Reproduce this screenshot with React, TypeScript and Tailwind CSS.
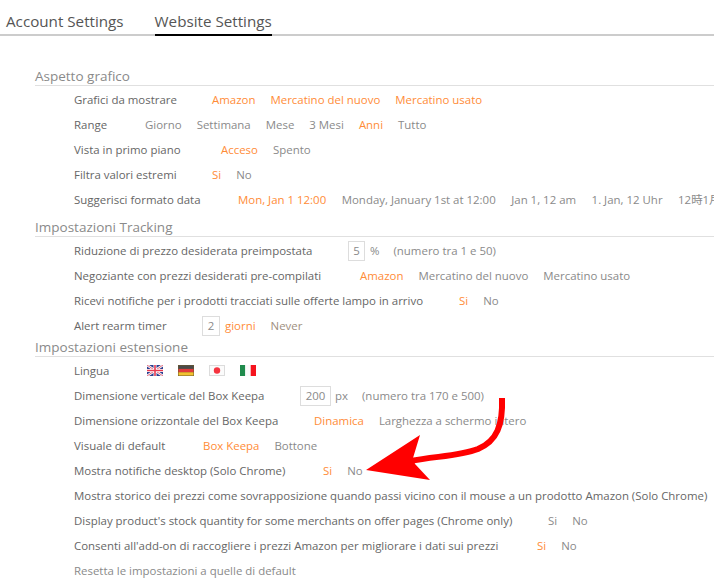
import React from 'react';

type Option = { label: string; active?: boolean };

const font = "[font-family:'Open_Sans','Noto_Sans_CJK_JP',sans-serif]";

const Choice: React.FC<Option> = ({ label, active }) => (
  <span className={active ? 'text-[#ff8c37]' : 'text-[#8a8a8a]'}>{label}</span>
);

const Row: React.FC<{ label: string; labelClass: string; options?: Option[]; gapClass?: string; muted?: boolean; children?: React.ReactNode }> = ({
  label,
  labelClass,
  options,
  gapClass = 'gap-[15px]',
  muted,
  children,
}) => (
  <div className="flex h-[25px] items-center whitespace-nowrap pl-[74px]">
    <span className={`shrink-0 ${labelClass} ${muted ? 'text-[#8a8a8a]' : 'text-[#666]'}`}>{label}</span>
    {children}
    {options && (
      <div className={`flex ${gapClass}`}>
        {options.map((o) => (
          <Choice key={o.label} {...o} />
        ))}
      </div>
    )}
  </div>
);

const Section: React.FC<{ title: string; className?: string; children: React.ReactNode }> = ({ title, className, children }) => (
  <section className={className}>
    <h2 className="ml-[35px] h-[18px] border-b border-[#e0e0e0] text-[13.5px] leading-[17px] text-[#8a8a8a]">{title}</h2>
    <div className="pt-[1px]">{children}</div>
  </section>
);

const NumberBox: React.FC<{ value: string; className: string }> = ({ value, className }) => (
  <span className={`flex h-[20px] shrink-0 items-center justify-center border border-[#ddd] text-[#8a8a8a] ${className}`}>{value}</span>
);

const FlagUK = () => (
  <svg width="16" height="11" viewBox="0 0 16 11" className="block">
    <rect width="16" height="11" fill="#2b3f8f" />
    <path d="M0 0L16 11M16 0L0 11" stroke="#fff" strokeWidth="2.4" />
    <path d="M0 0L16 11M16 0L0 11" stroke="#e0566a" strokeWidth="0.9" />
    <path d="M8 0V11M0 5.5H16" stroke="#fff" strokeWidth="3" />
    <path d="M8 0V11M0 5.5H16" stroke="#e8384f" strokeWidth="1.6" />
  </svg>
);

const FlagDE = () => (
  <svg width="16" height="11" viewBox="0 0 16 11" className="block">
    <rect width="16" height="11" fill="#6e5a2a" />
    <rect x="0.5" y="0.5" width="15" height="3.4" fill="#4a4a4a" />
    <rect x="0.5" y="3.9" width="15" height="3.4" fill="#e23b3b" />
    <rect x="0.5" y="7.3" width="15" height="3.2" fill="#f2c230" />
  </svg>
);

const FlagJP = () => (
  <svg width="16" height="11" viewBox="0 0 16 11" className="block">
    <rect x="0.5" y="0.5" width="15" height="10" fill="#fbfbfb" stroke="#dcdcdc" />
    <circle cx="8" cy="5.5" r="3.2" fill="#f5333f" />
  </svg>
);

const FlagIT = () => (
  <svg width="16" height="11" viewBox="0 0 16 11" className="block">
    <rect width="5.3" height="11" fill="#1f8a4c" />
    <rect x="5.3" width="5.4" height="11" fill="#fafafa" />
    <rect x="10.7" width="5.3" height="11" fill="#f5141e" />
  </svg>
);

export default function App() {
  return (
    <div className={`relative h-[586px] w-[714px] overflow-hidden bg-white text-[11.45px] ${font}`}>
      {/* tabs */}
      <div className="flex h-[36px] items-end gap-[31px] border-b-2 border-[#ccc] pl-[6px] text-[15.2px] text-[#555]">
        <span className="h-[35px] pt-[10px] leading-[24px]">Account Settings</span>
        <span className="-mb-[2px] h-[37px] border-b-2 border-black pt-[10px] leading-[24px]">Website Settings</span>
      </div>

      <Section title="Aspetto grafico" className="pt-[32px]">
        <Row
          label="Grafici da mostrare"
          labelClass="w-[138px]"
          options={[
            { label: 'Amazon', active: true },
            { label: 'Mercatino del nuovo', active: true },
            { label: 'Mercatino usato', active: true },
          ]}
        />
        <Row
          label="Range"
          labelClass="w-[71px]"
          options={[
            { label: 'Giorno' },
            { label: 'Settimana' },
            { label: 'Mese' },
            { label: '3 Mesi' },
            { label: 'Anni', active: true },
            { label: 'Tutto' },
          ]}
        />
        <Row label="Vista in primo piano" labelClass="w-[147px]" options={[{ label: 'Acceso', active: true }, { label: 'Spento' }]} />
        <Row label="Filtra valori estremi" labelClass="w-[138px]" options={[{ label: 'Si', active: true }, { label: 'No' }]} />
        <Row
          label="Suggerisci formato data"
          labelClass="w-[164px]"
          gapClass="gap-[15.5px]"
          options={[
            { label: 'Mon, Jan 1 12:00', active: true },
            { label: 'Monday, January 1st at 12:00' },
            { label: 'Jan 1, 12 am' },
            { label: '1. Jan, 12 Uhr' },
            { label: '12時1月1日' },
          ]}
        />
      </Section>

      <Section title="Impostazioni Tracking" className="pt-[7px]">
        <Row label="Riduzione di prezzo desiderata preimpostata" labelClass="w-[274px]">
          <NumberBox value="5" className="w-[17px]" />
          <span className="ml-[5px] text-[#8a8a8a]">%</span>
          <span className="ml-[14px] text-[#8a8a8a]">(numero tra 1 e 50)</span>
        </Row>
        <Row
          label="Negoziante con prezzi desiderati pre-compilati"
          labelClass="w-[286px]"
          options={[{ label: 'Amazon', active: true }, { label: 'Mercatino del nuovo' }, { label: 'Mercatino usato' }]}
        />
        <Row
          label="Ricevi notifiche per i prodotti tracciati sulle offerte lampo in arrivo"
          labelClass="w-[385px]"
          options={[{ label: 'Si', active: true }, { label: 'No' }]}
        />
        <Row label="Alert rearm timer" labelClass="w-[128px]">
          <NumberBox value="2" className="w-[18px]" />
          <span className="ml-[5px] text-[#ff8c37]">giorni</span>
          <span className="ml-[15px] text-[#a08f80]">Never</span>
        </Row>
      </Section>

      <Section title="Impostazioni estensione" className="pt-[1px]">
        <div className="flex h-[25px] items-center pl-[74px]">
          <span className="w-[73px] text-[#666]">Lingua</span>
          <div className="-mt-[1px] flex gap-[15px]">
            <FlagUK />
            <FlagDE />
            <FlagJP />
            <FlagIT />
          </div>
        </div>
        <Row label="Dimensione verticale del Box Keepa" labelClass="w-[226px]">
          <NumberBox value="200" className="w-[31px]" />
          <span className="ml-[4px] text-[#8a8a8a]">px</span>
          <span className="ml-[14px] text-[#8a8a8a]">(numero tra 170 e 500)</span>
        </Row>
        <Row
          label="Dimensione orizzontale del Box Keepa"
          labelClass="w-[240px]"
          options={[{ label: 'Dinamica', active: true }, { label: 'Larghezza a schermo intero' }]}
        />
        <Row label="Visuale di default" labelClass="w-[129px]" options={[{ label: 'Box Keepa', active: true }, { label: 'Bottone' }]} />
        <Row label="Mostra notifiche desktop (Solo Chrome)" labelClass="w-[249px]" options={[{ label: 'Si', active: true }, { label: 'No' }]} />
        <Row label="Mostra storico dei prezzi come sovrapposizione quando passi vicino con il mouse a un prodotto Amazon (Solo Chrome)" labelClass="w-auto" />
        <Row
          label="Display product's stock quantity for some merchants on offer pages (Chrome only)"
          labelClass="w-[474px]"
          options={[{ label: 'Si' }, { label: 'No' }]}
        />
        <Row
          label="Consenti all'add-on di raccogliere i prezzi Amazon per migliorare i dati sui prezzi"
          labelClass="w-[463px]"
          options={[{ label: 'Si', active: true }, { label: 'No' }]}
        />
        <Row label="Resetta le impostazioni a quelle di default" labelClass="w-auto" muted />
      </Section>

      {/* red annotation arrow lying over the page */}
      <svg className="pointer-events-none absolute left-0 top-0" width="714" height="586" viewBox="0 0 714 586">
        <path d="M502 398C503 425 497 441 478 449C460 456 437 456 410 461" fill="none" stroke="#ff0000" strokeWidth="6" />
        <path d="M366 470L420 435L413 458L415 464L430 480Z" fill="#ff0000" />
      </svg>
    </div>
  );
}
